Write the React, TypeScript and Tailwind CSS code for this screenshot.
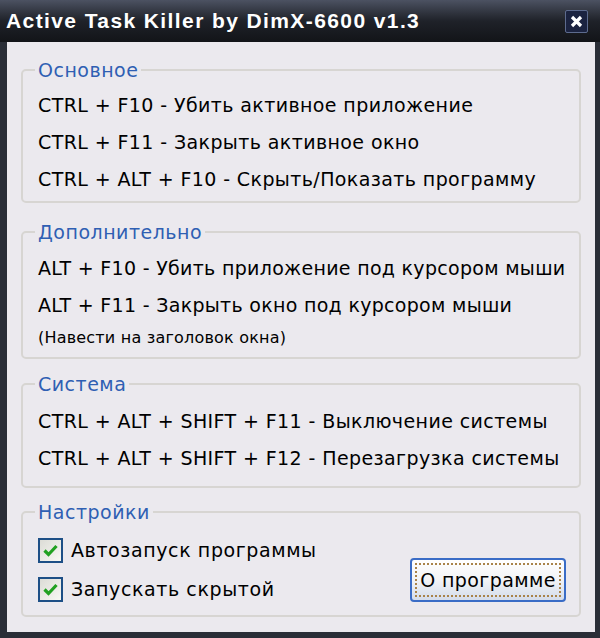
import React from "react";

const font = { fontFamily: '"DejaVu Sans", Tahoma, Verdana, sans-serif' };

function Check() {
  return (
    <span className="flex h-[25px] w-[25px] items-center justify-center border-2 border-[#1d4f86] bg-gradient-to-br from-[#dcdcd6] to-[#f8f8f4]">
      <svg width="15" height="13" viewBox="0 0 15 13">
        <path d="M1.5 6.5 L5.5 10.5 L13.5 2" fill="none" stroke="#21a121" strokeWidth="3.2" />
      </svg>
    </span>
  );
}

function Group({ title, className, children }: { title: string; className: string; children: React.ReactNode }) {
  return (
    <fieldset className={"rounded-[5px] border-2 border-[#d7d5d2] " + className}>
      <legend className="ml-[12px] h-[24px] px-[3px] text-[19px] leading-[24px] tracking-[0.5px] text-[#2f5fb3]">{title}</legend>
      {children}
    </fieldset>
  );
}

export default function App() {
  return (
    <div className="flex h-[638px] w-[600px] flex-col bg-[#2a2e37] text-black" style={font}>
      {/* title bar */}
      <div className="flex h-[42px] items-center justify-between bg-gradient-to-b from-[#4c5262] via-[#1f2229] to-[#121418] pl-[6px] pr-[12px]">
        <span className="font-['Liberation_Sans',Arial,sans-serif] text-[21px] font-bold tracking-[1.4px] text-white">
          Active Task Killer by DimX-6600 v1.3
        </span>
        <span className="flex h-[23px] w-[23px] items-center justify-center rounded-[2px] border border-[#5d6b8e] bg-[#1b2340]">
          <svg width="13" height="13" viewBox="0 0 13 13">
            <path d="M2 2 L11 11 M11 2 L2 11" stroke="#fff" strokeWidth="3.2" />
          </svg>
        </span>
      </div>

      {/* body */}
      <div className="mb-[6px] ml-[7px] mr-[5px] flex-1 bg-[#ebe9ee] px-[14px] pt-[16px]">
        <Group title="Основное" className="h-[145px]">
          <div className="pl-[15px] pt-[5px] text-[19px] leading-[37px] tracking-[0.4px]">
            <div>CTRL + F10 - Убить активное приложение</div>
            <div>CTRL + F11 - Закрыть активное окно</div>
            <div>CTRL + ALT + F10 - Скрыть/Показать программу</div>
          </div>
        </Group>

        <Group title="Дополнительно" className="mt-[17px] h-[139px]">
          <div className="pl-[15px] pt-[6px] text-[19px] leading-[37px] tracking-[0.3px]">
            <div>ALT + F10 - Убить приложение под курсором мыши</div>
            <div>ALT + F11 - Закрыть окно под курсором мыши</div>
            <div className="text-[16px] leading-[27px] tracking-[0.2px]">(Навести на заголовок окна)</div>
          </div>
        </Group>

        <Group title="Система" className="mt-[13px] h-[116px]">
          <div className="pl-[15px] pt-[7px] text-[19px] leading-[37px] tracking-[0.4px]">
            <div>CTRL + ALT + SHIFT + F11 - Выключение системы</div>
            <div>CTRL + ALT + SHIFT + F12 - Перезагрузка системы</div>
          </div>
        </Group>

        <Group title="Настройки" className="mt-[12px] h-[117px]">
          <div className="flex items-end justify-between pl-[15px] pr-[13px] pt-[14px]">
            <div className="flex flex-col gap-[14px] text-[19px] tracking-[0.6px]">
              <label className="flex items-center gap-[8px] leading-[25px]">
                <Check />
                <span>Автозапуск программы</span>
              </label>
              <label className="flex items-center gap-[8px] leading-[25px]">
                <Check />
                <span>Запускать скрытой</span>
              </label>
            </div>
            <button className="h-[44px] w-[156px] rounded-[4px] border-2 border-[#3a6cc6] bg-gradient-to-b from-white via-[#f2f3f6] to-[#d3dcec] p-[3px]">
              <span className="flex h-full w-full items-center justify-center border-2 border-dotted border-[#a9834a] text-[19px] leading-none tracking-[0.4px]">
                О программе
              </span>
            </button>
          </div>
        </Group>
      </div>
    </div>
  );
}
